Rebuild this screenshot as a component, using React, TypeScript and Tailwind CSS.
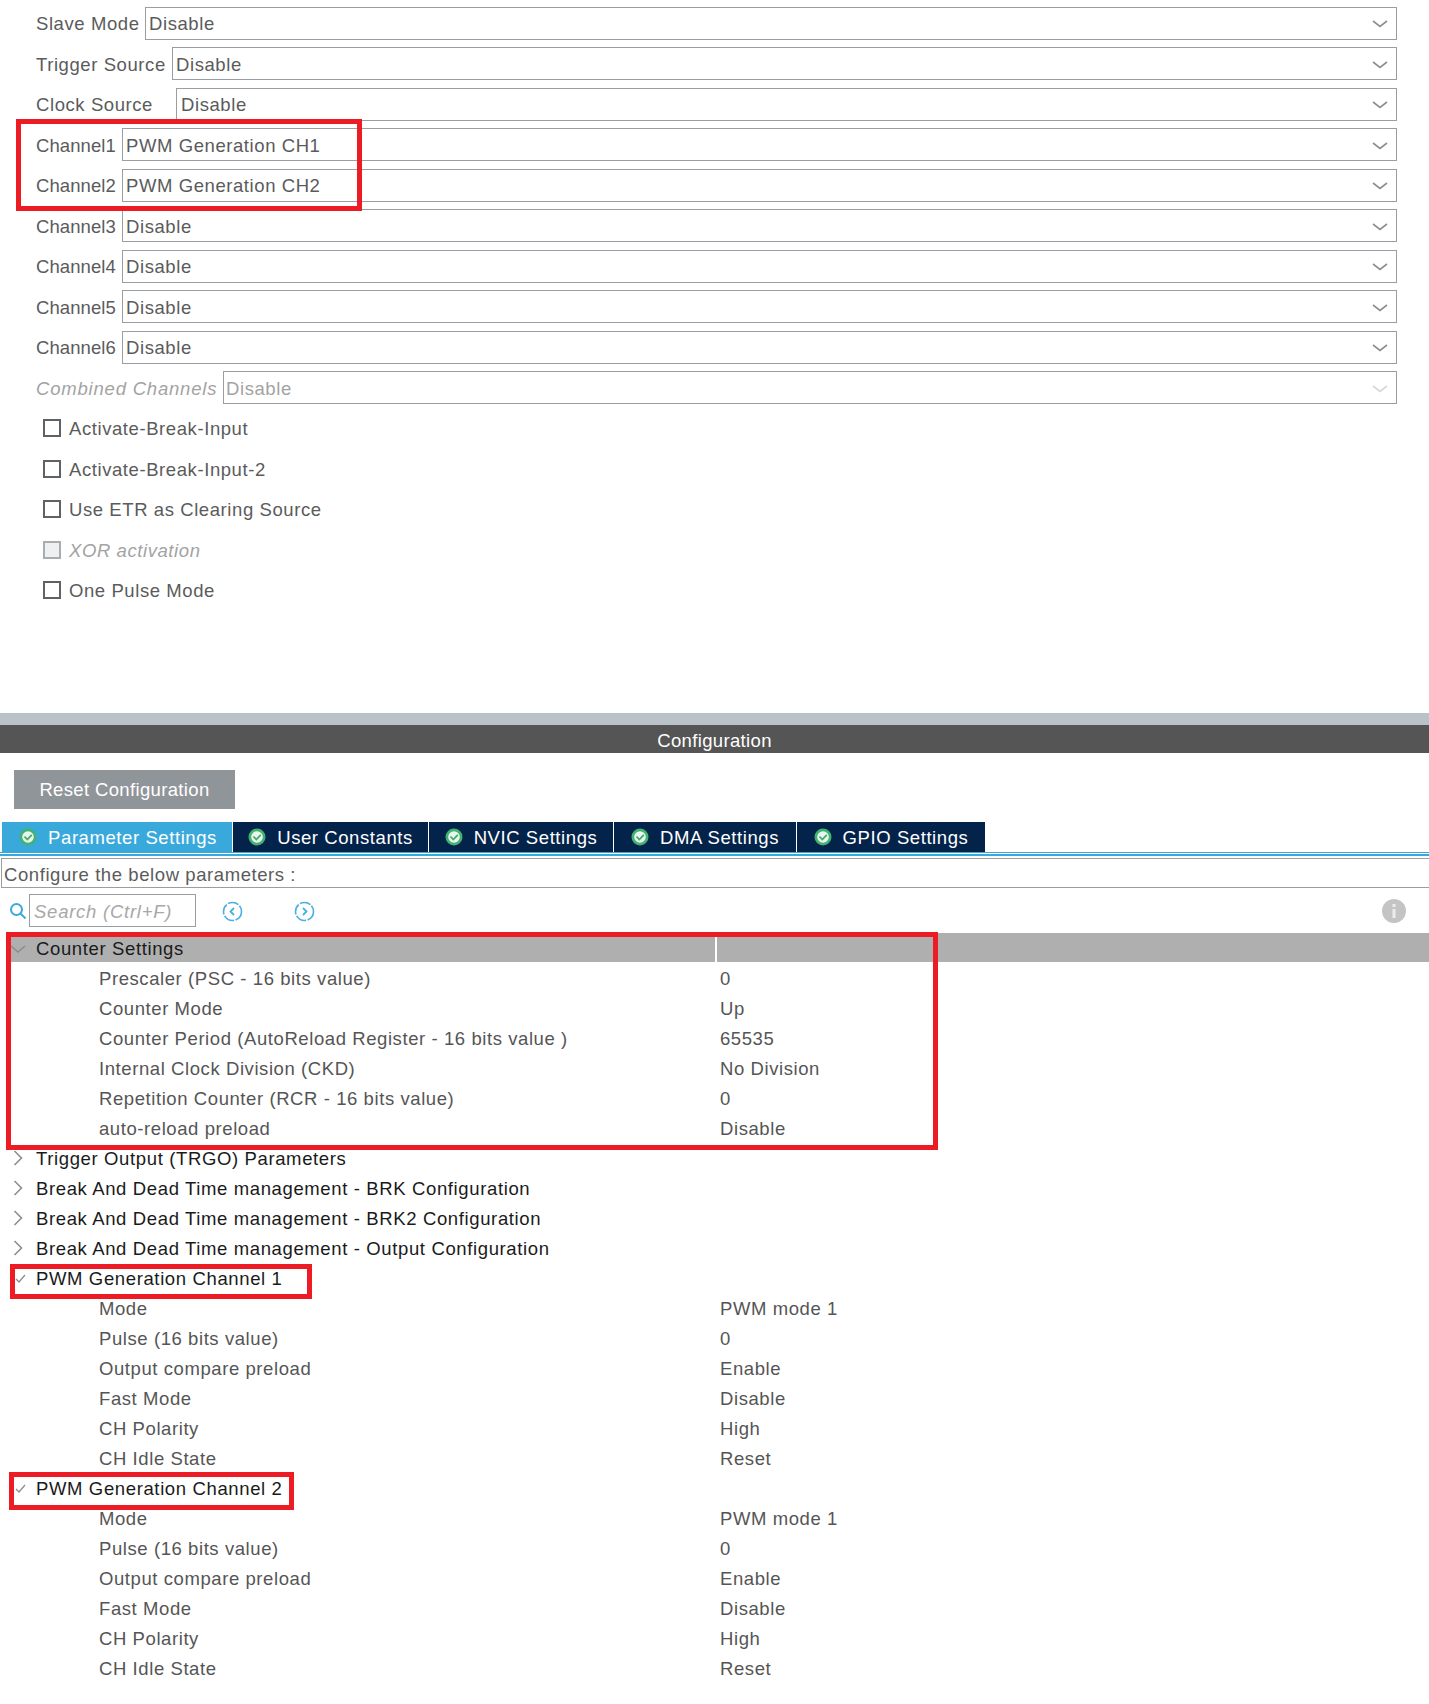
const topRows = [
  { label: 'Slave Mode', value: 'Disable', left: 'w-[145px]' },
  { label: 'Trigger Source', value: 'Disable', left: 'w-[172px]' },
  { label: 'Clock Source', value: 'Disable', left: 'w-[176px]', pad: 'pl-[4px]' },
  { label: 'Channel1', value: 'PWM Generation CH1', left: 'w-[122px]', pad: 'pl-[3px]', tight: true },
  { label: 'Channel2', value: 'PWM Generation CH2', left: 'w-[122px]', pad: 'pl-[3px]', tight: true },
  { label: 'Channel3', value: 'Disable', left: 'w-[122px]', pad: 'pl-[3px]', tight: true },
  { label: 'Channel4', value: 'Disable', left: 'w-[122px]', pad: 'pl-[3px]', tight: true },
  { label: 'Channel5', value: 'Disable', left: 'w-[122px]', pad: 'pl-[3px]', tight: true },
  { label: 'Channel6', value: 'Disable', left: 'w-[122px]', pad: 'pl-[3px]', tight: true },
]

const checks = ['Activate-Break-Input', 'Activate-Break-Input-2', 'Use ETR as Clearing Source']

const tabs = [
  { label: 'Parameter Settings', width: 'w-[230px]', active: true },
  { label: 'User Constants', width: 'w-[195px]' },
  { label: 'NVIC Settings', width: 'w-[184px]' },
  { label: 'DMA Settings', width: 'w-[182px]' },
  { label: 'GPIO Settings', width: 'w-[188px]' },
]

const counter = [
  ['Prescaler (PSC - 16 bits value)', '0'],
  ['Counter Mode', 'Up'],
  ['Counter Period (AutoReload Register - 16 bits value )', '65535'],
  ['Internal Clock Division (CKD)', 'No Division'],
  ['Repetition Counter (RCR - 16 bits value)', '0'],
  ['auto-reload preload', 'Disable'],
]

const closed = [
  'Trigger Output (TRGO) Parameters',
  'Break And Dead Time management - BRK Configuration',
  'Break And Dead Time management - BRK2 Configuration',
  'Break And Dead Time management - Output Configuration',
]

const pwm = [
  ['Mode', 'PWM mode 1'],
  ['Pulse (16 bits value)', '0'],
  ['Output compare preload', 'Enable'],
  ['Fast Mode', 'Disable'],
  ['CH Polarity', 'High'],
  ['CH Idle State', 'Reset'],
]

function Chevron({ disabled }: { disabled?: boolean }) {
  return (
    <svg width="16" height="10" viewBox="0 0 16 10" fill="none" className="mt-[2px] mr-[8px]">
      <path d="M1 2 L8 7.5 L15 2" stroke={disabled ? '#d4d8db' : '#8a8f92'} strokeWidth="1.6" />
    </svg>
  )
}

function CheckIcon() {
  return (
    <svg width="18" height="18" viewBox="0 0 18 18" className="shrink-0">
      <circle cx="9" cy="9" r="8.5" fill="#42b271" />
      <circle cx="9" cy="9" r="5.8" fill="#e9f6ee" />
      <path d="M5.5 8.5 L8.3 11.5 L12.8 6.8" fill="none" stroke="#3faa6b" strokeWidth="1.8" />
    </svg>
  )
}

function NavIcon({ dir }: { dir: 'left' | 'right' }) {
  return (
    <svg width="21" height="21" viewBox="0 0 21 21" fill="none">
      <circle cx="10.5" cy="10.5" r="9" stroke="#48b0e0" strokeWidth="1.6" strokeDasharray="11 1.5" />
      <path d={dir === 'left' ? 'M12 7 L8.5 10.5 L12 14' : 'M9 7 L12.5 10.5 L9 14'} stroke="#48b0e0" strokeWidth="1.8" />
    </svg>
  )
}

function ParamRow({ label, value }: { label: string; value: string }) {
  return (
    <div className="flex h-[30px] items-center text-[#555555]">
      <div className="w-[720px] pl-[99px]">{label}</div>
      <div>{value}</div>
    </div>
  )
}

function SectionRow({ label, open, check }: { label: string; open?: boolean; check?: boolean }) {
  return (
    <div className="flex h-[30px] items-center tracking-[0.63px] text-[#1a1a1a]">
      <div className="flex w-[36px] shrink-0 items-center">
        {check ? (
          <svg width="12" height="12" viewBox="0 0 12 12" fill="none" className="mb-[2px] ml-[15px]">
            <path d="M1 7 L4 10 L10 3" stroke="#8a8f92" strokeWidth="1.3" />
          </svg>
        ) : open ? (
          <svg width="16" height="10" viewBox="0 0 16 10" fill="none" className="ml-[10px]">
            <path d="M1 2 L8 8 L15 2" stroke="#8c8c8c" strokeWidth="1.5" />
          </svg>
        ) : (
          <svg width="10" height="16" viewBox="0 0 10 16" fill="none" className="mb-[2px] ml-[13px]">
            <path d="M1.5 1 L8.5 8 L1.5 15" stroke="#8a8f92" strokeWidth="1.6" />
          </svg>
        )}
      </div>
      <div>{label}</div>
    </div>
  )
}

export default function App() {
  return (
    <div className="relative h-[1704px] w-[1429px] overflow-hidden bg-white font-['Liberation_Sans',Arial,sans-serif] text-[18.5px] tracking-[0.58px] whitespace-pre">
      {/* Mode panel */}
      <div className="pt-[3px] pr-[32px] text-[#5b5b5b]">
        {topRows.map((r) => (
          <div key={r.label} className="flex h-[40.5px] items-center">
            <div className={`${r.left} shrink-0 pt-[2px] pl-[36px] ${r.tight ? 'tracking-[0.08px]' : ''}`}>{r.label}</div>
            <div className={`flex h-[33px] flex-1 items-center justify-between border border-[#9a9ea2] pl-[3px] ${r.pad ?? ''}`}>
              <span className="pt-[2px]">{r.value}</span>
              <Chevron />
            </div>
          </div>
        ))}
        <div className="flex h-[40.5px] items-center text-[#a3a3a3]">
          <div className="w-[223px] shrink-0 pt-[2px] pl-[36px] tracking-[0.8px] italic">Combined Channels</div>
          <div className="flex h-[33px] flex-1 items-center justify-between border border-[#9a9ea2] pl-[2px]">
            <span className="pt-[2px]">Disable</span>
            <Chevron disabled />
          </div>
        </div>
        {checks.map((c) => (
          <div key={c} className="flex h-[40.5px] items-center pl-[43px]">
            <div className="mr-[8px] h-[18px] w-[18px] border-2 border-[#5f6264]" />
            <span className="pt-[2px]">{c}</span>
          </div>
        ))}
        <div className="flex h-[40.5px] items-center pl-[43px] text-[#a3a3a3] italic">
          <div className="mr-[8px] h-[18px] w-[18px] border-2 border-[#a9adaf] bg-[#eef0f2]" />
          <span className="pt-[2px]">XOR activation</span>
        </div>
        <div className="flex h-[40.5px] items-center pl-[43px]">
          <div className="mr-[8px] h-[18px] w-[18px] border-2 border-[#5f6264]" />
          <span className="pt-[2px]">One Pulse Mode</span>
        </div>
      </div>

      {/* Configuration panel */}
      <div className="mt-[102.5px] h-[12px] bg-[#b8c2c8]" />
      <div className="flex h-[28px] items-center justify-center bg-[#545554] pt-[4px] tracking-[0.35px] text-white">Configuration</div>
      <div className="mt-[17px] ml-[14px] flex h-[39px] w-[221px] items-center justify-center bg-[#90959a] pt-[1px] tracking-[0.35px] text-white">Reset Configuration</div>

      <div className="mt-[13px] flex h-[30px] pl-[2px] text-white">
        {tabs.map((t) => (
          <div key={t.label} className={`${t.width} mr-[1px] flex items-center justify-center gap-[11px] ${t.active ? 'bg-[#39a9dc] pl-[2px]' : 'bg-[#03234b]'}`}>
            <CheckIcon />
            <span className="pt-[1px]">{t.label}</span>
          </div>
        ))}
      </div>
      <div className="h-[1px] bg-[#39a9dc]" />
      <div className="mt-[1px] h-[2px] bg-[#39a9dc]" />

      <div className="mt-[2px] ml-[1px] flex h-[30px] items-center border-y border-l border-[#9a9ea2] pt-[3px] pl-[2px] text-[#5b5b5b]">Configure the below parameters :</div>

      <div className="mt-[6px] flex h-[33px] items-center pr-[24px]">
        <svg width="18" height="18" viewBox="0 0 18 18" fill="none" className="ml-[9px]">
          <circle cx="7.5" cy="7.5" r="5.5" stroke="#3aa9dc" strokeWidth="2" />
          <path d="M11.5 11.5 L16.5 16.5" stroke="#3aa9dc" strokeWidth="2" />
        </svg>
        <div className="ml-[2px] flex h-[33px] w-[167px] items-center border border-[#9a9ea2] pt-[2px] pl-[4px] tracking-[0.75px] text-[#a8a8a8] italic">Search (Ctrl+F)</div>
        <div className="mt-[1px] ml-[26px]"><NavIcon dir="left" /></div>
        <div className="mt-[1px] ml-[51px]"><NavIcon dir="right" /></div>
        <svg width="24" height="24" viewBox="0 0 24 24" className="mt-[1px] mr-[-1px] ml-auto">
          <circle cx="12" cy="12" r="12" fill="#c4c4c4" />
          <rect x="10.5" y="10" width="3" height="9" fill="#ececec" />
          <rect x="10.5" y="5" width="3" height="3" fill="#ececec" />
        </svg>
      </div>

      <div className="mt-[6px] ml-[6px] flex h-[29px] bg-[#afafaf] pr-[1px]">
        <div className="ml-[-6px] w-[717px] border-r-2 border-white pt-[1px]">
          <SectionRow label="Counter Settings" open />
        </div>
      </div>
      <div className="mt-[2px]">
        {counter.map((r) => <ParamRow key={r[0]} label={r[0]} value={r[1]} />)}
        {closed.map((c) => <SectionRow key={c} label={c} />)}
        <SectionRow label="PWM Generation Channel 1" check />
        {pwm.map((r) => <ParamRow key={r[0]} label={r[0]} value={r[1]} />)}
        <SectionRow label="PWM Generation Channel 2" check />
        {pwm.map((r) => <ParamRow key={r[0]} label={r[0]} value={r[1]} />)}
      </div>

      {/* Red annotation boxes */}
      <div className="absolute top-[119px] left-[16px] h-[92px] w-[346px] border-[5px] border-[#ed1c24]" />
      <div className="absolute top-[932px] left-[6px] h-[218px] w-[932px] border-[5px] border-[#ed1c24]" />
      <div className="absolute top-[1264px] left-[10px] h-[35px] w-[302px] border-[5px] border-[#ed1c24]" />
      <div className="absolute top-[1472px] left-[9px] h-[38px] w-[285px] border-[5px] border-[#ed1c24]" />
    </div>
  )
}
